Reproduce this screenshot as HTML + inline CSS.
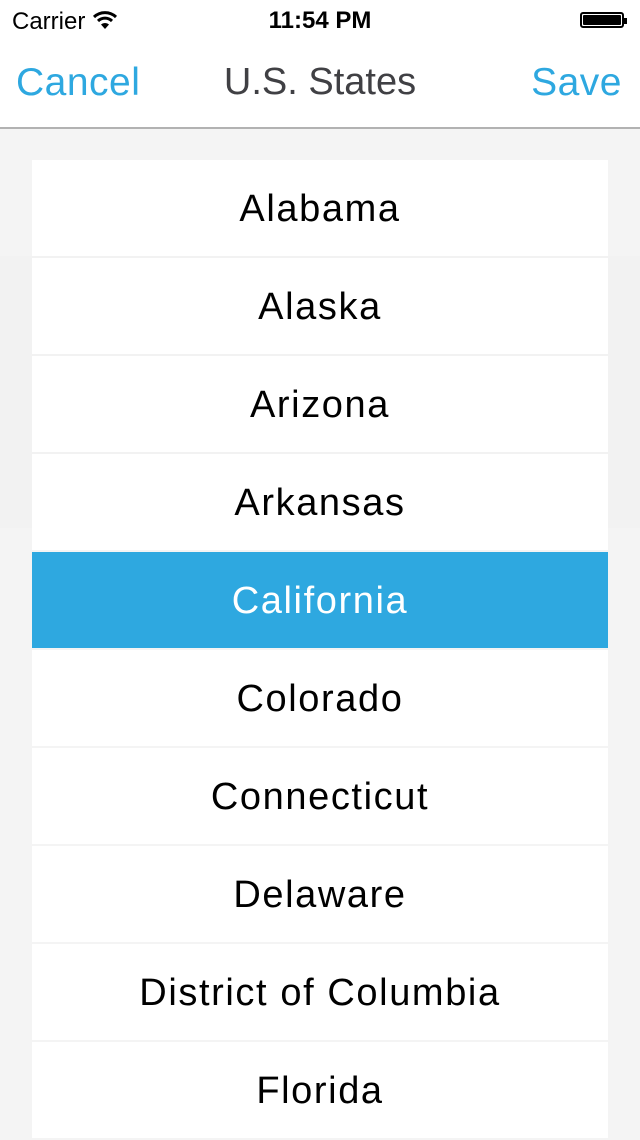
<!DOCTYPE html>
<html><head><style>
body{margin:0;width:640px;height:1136px;background:#f4f4f4;font-family:"Liberation Sans",sans-serif;overflow:hidden;position:relative}
.sb{position:absolute;top:0;left:0;width:640px;height:129px;background:#fff;border-bottom:2px solid #b2b2b2;box-sizing:border-box}
.carrier{position:absolute;left:12px;top:8px;font-size:24px;color:#000}
.time{position:absolute;left:0;width:640px;text-align:center;top:7px;font-size:24px;font-weight:bold;color:#000}
.bat{position:absolute;left:580px;top:12px;width:44px;height:16px;border:2px solid #000;border-radius:3px;box-sizing:border-box;padding:1px}
.bat i{display:block;width:100%;height:100%;background:#000;border-radius:1px}
.bat:after{content:"";position:absolute;right:-5px;top:4px;width:3px;height:6px;background:#000}
.nav{position:absolute;top:61px;font-size:39px;color:#2ea8e0;letter-spacing:0.5px}
.title{position:absolute;top:61px;left:0;width:640px;text-align:center;font-size:38px;color:#404044}
.list{position:absolute;left:32px;top:160px;width:576px}
.row{height:96px;margin-bottom:2px;background:#fff;text-align:center;line-height:98px;font-size:38px;color:#000;letter-spacing:1.6px}
.row.sel{background:#2ea8e0;color:#fff}
.band{position:absolute;left:0;width:640px;top:256px;height:272px;background:#f2f2f2}
</style></head><body>
<div class="band"></div>
<div class="sb">
<div class="carrier">Carrier <svg width="26" height="20" viewBox="0 0 26 20" style="vertical-align:-1px"><path d="M2 7 A16 16 0 0 1 24 7" stroke="#000" stroke-width="3" fill="none"/><path d="M6 11 A10 10 0 0 1 20 11" stroke="#000" stroke-width="3" fill="none"/><path d="M13 19 L9 14.5 A6 6 0 0 1 17 14.5 Z" fill="#000"/></svg></div>
<div class="time">11:54 PM</div>
<div class="bat"><i></i></div>
<div class="nav" style="left:16px">Cancel</div>
<div class="title">U.S. States</div>
<div class="nav" style="right:18px">Save</div>
</div>
<div class="list">
<div class="row">Alabama</div>
<div class="row">Alaska</div>
<div class="row">Arizona</div>
<div class="row">Arkansas</div>
<div class="row sel">California</div>
<div class="row">Colorado</div>
<div class="row">Connecticut</div>
<div class="row">Delaware</div>
<div class="row">District of Columbia</div>
<div class="row">Florida</div>
</div>
</body></html>
